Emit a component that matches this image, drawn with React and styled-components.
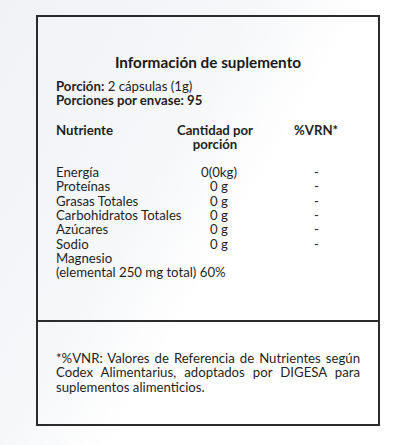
import React from "react";
import styled, { createGlobalStyle } from "styled-components";

const GlobalStyle = createGlobalStyle`
  html, body {
    margin: 0;
    padding: 0;
  }
  body {
    width: 416px;
    height: 445px;
    overflow: hidden;
    font-family: "Lato", "Liberation Sans", sans-serif;
    color: #1f1f1f;
    background: linear-gradient(120deg, #f1f2f6 0%, #f6f7f9 38%, #ffffff 55%, #ffffff 100%);
  }
`;

const nutrients = [
  { name: "Energía", amount: "0(0kg)", vrn: "-" },
  { name: "Proteínas", amount: "0 g", vrn: "-" },
  { name: "Grasas Totales", amount: "0 g", vrn: "-" },
  { name: "Carbohidratos Totales", amount: "0 g", vrn: "-" },
  { name: "Azúcares", amount: "0 g", vrn: "-" },
  { name: "Sodio", amount: "0 g", vrn: "-" },
];

const App = () => {
  return (
    <Page>
      <GlobalStyle />
      <Label>
        <Main>
          <Title>Información de suplemento</Title>
          <Serving>
            <div>
              <b>Porción:</b> 2 cápsulas (1g)
            </div>
            <div>
              <b>Porciones por envase: 95</b>
            </div>
          </Serving>
          <Table>
            <Head>Nutriente</Head>
            <Head $center>
              Cantidad por
              <br />
              porción
            </Head>
            <Head $vrn>%VRN*</Head>
            <Spacer />
            {nutrients.map((item) => (
              <React.Fragment key={item.name}>
                <Cell>{item.name}</Cell>
                <Cell $amount>{item.amount}</Cell>
                <Cell $vrn>{item.vrn}</Cell>
              </React.Fragment>
            ))}
            <Wide>Magnesio</Wide>
            <Wide>(elemental 250 mg total) 60%</Wide>
          </Table>
        </Main>
        <Footer>
          <Note>
            *%VNR: Valores de Referencia de Nutrientes según Codex
            Alimentarius, adoptados por DIGESA para suplementos alimenticios.
          </Note>
        </Footer>
      </Label>
    </Page>
  );
};

export default App;

const Page = styled.div`
  padding-top: 15px;
`;

const Label = styled.section`
  width: 344px;
  margin: 0 auto;
  box-sizing: border-box;
  border: 2px solid #2b2b2b;
`;

const Main = styled.div`
  height: 305px;
  box-sizing: border-box;
  padding: 35px 18px 0 18px;
  border-bottom: 2px solid #2b2b2b;
`;

const Title = styled.h1`
  margin: 0;
  font-size: 15.3px;
  font-weight: 700;
  text-align: center;
  line-height: 20px;
  color: #1a1a1a;
`;

const Serving = styled.div`
  margin-top: 7px;
  font-size: 13.2px;
  line-height: 14.3px;

  b {
    font-weight: 700;
  }
`;

const Table = styled.div`
  margin-top: 15px;
  display: grid;
  grid-template-columns: 119px 80px 1fr;
  font-size: 13.2px;
  line-height: 14.3px;
`;

const Head = styled.div`
  font-weight: 700;
  text-align: ${(p) => (p.$center ? "center" : "left")};
  padding-left: ${(p) => (p.$vrn ? "39px" : "0")};
`;

const Spacer = styled.div`
  grid-column: 1 / -1;
  height: 14px;
`;

const Cell = styled.div`
  white-space: nowrap;
  text-align: ${(p) => (p.$amount || p.$vrn ? "center" : "left")};
  padding-left: ${(p) => (p.$amount ? "8px" : p.$vrn ? "18px" : "0")};
`;

const Wide = styled.div`
  grid-column: 1 / -1;
  white-space: nowrap;
`;

const Footer = styled.div`
  height: 102px;
  box-sizing: border-box;
  padding: 29px 18px 0 18px;
`;

const Note = styled.p`
  margin: 0;
  font-size: 13.2px;
  line-height: 14.3px;
  text-align: justify;
`;
